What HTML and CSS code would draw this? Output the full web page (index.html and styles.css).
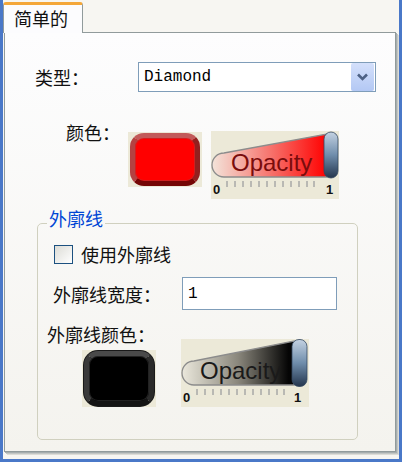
FILE: index.html
```html
<!DOCTYPE html>
<html lang="zh">
  <head>
    <meta charset="UTF-8">
    <title>简单的</title>
    <link rel="stylesheet" href="styles.css">
  </head>
  <body>
    <div class="window">
      <div class="tabs">
        <div class="tab">简单的</div>
      </div>
      <div class="panel">
        <div class="row row--type">
          <span class="label label--type">类型：</span>
          <div class="combo">
            <span class="combo__text">Diamond</span>
            <span class="combo__btn">
              <svg width="23" height="28" viewBox="0 0 23 28"><path d="M7 11.5 L11.5 16 L16 11.5" fill="none" stroke="#4d6185" stroke-width="2.6"/></svg>
            </span>
          </div>
        </div>
        <div class="row row--color">
          <span class="label label--color">颜色：</span>
          <div class="swatch swatch--fill"><div class="swatch__inner swatch__inner--red"></div></div>
          <svg class="opacity opacity--fill" width="128" height="68" viewBox="0 0 128 68">
            <defs>
              <linearGradient id="gRed" x1="0" y1="0" x2="1" y2="0">
                <stop offset="0" stop-color="#f3e4da"/>
                <stop offset="0.55" stop-color="#f76a64"/>
                <stop offset="1" stop-color="#ff0000"/>
              </linearGradient>
              <linearGradient id="gThumb" x1="0" y1="0" x2="0" y2="1">
                <stop offset="0" stop-color="#c4d2e2"/>
                <stop offset="0.5" stop-color="#6f8dab"/>
                <stop offset="1" stop-color="#24354d"/>
              </linearGradient>
            </defs>
            <rect width="128" height="68" fill="#ece9d8"/>
            <path d="M13 46 A12 12 0 0 1 13 22 L116 3 L116 46 Z" fill="url(#gRed)" stroke="#8c8c8c" stroke-width="1.3"/>
            <text x="20" y="40" class="opacity__text" fill="#7a0c0c">Opacity</text>
            <rect x="113" y="1" width="14" height="46" rx="7" fill="url(#gThumb)" stroke="#34475f" stroke-width="0.8"/>
            <g stroke="#a4a4a4" stroke-width="1.4">
              <line x1="16" y1="50" x2="16" y2="56"/><line x1="24" y1="50" x2="24" y2="56"/><line x1="32" y1="50" x2="32" y2="56"/>
              <line x1="40" y1="50" x2="40" y2="56"/><line x1="48" y1="50" x2="48" y2="56"/><line x1="56" y1="50" x2="56" y2="56"/>
              <line x1="64" y1="50" x2="64" y2="56"/><line x1="72" y1="50" x2="72" y2="56"/><line x1="80" y1="50" x2="80" y2="56"/>
              <line x1="88" y1="50" x2="88" y2="56"/><line x1="96" y1="50" x2="96" y2="56"/><line x1="103" y1="50" x2="103" y2="56"/>
            </g>
            <text x="2" y="63" class="opacity__num">0</text>
            <text x="115" y="63" class="opacity__num">1</text>
          </svg>
        </div>
        <fieldset class="group">
          <legend class="group__title">外廓线</legend>
          <label class="check">
            <span class="check__box"></span>
            <span>使用外廓线</span>
          </label>
          <div class="row row--width">
            <span class="label label--width">外廓线宽度：</span>
            <input class="field" type="text" value="1">
          </div>
          <div class="row row--outline">
            <div class="outline-left">
              <span class="label">外廓线颜色：</span>
              <div class="swatch swatch--outline"><div class="swatch__inner swatch__inner--black"></div></div>
            </div>
            <svg class="opacity opacity--outline" width="128" height="68" viewBox="0 0 128 68">
              <defs>
                <linearGradient id="gBlack" x1="0" y1="0" x2="1" y2="0">
                  <stop offset="0" stop-color="#ebe8dc"/>
                  <stop offset="0.5" stop-color="#8a877c"/>
                  <stop offset="0.95" stop-color="#050505"/>
                </linearGradient>
                <linearGradient id="gThumb2" x1="0" y1="0" x2="0" y2="1">
                  <stop offset="0" stop-color="#c4d2e2"/>
                  <stop offset="0.5" stop-color="#6f8dab"/>
                  <stop offset="1" stop-color="#24354d"/>
                </linearGradient>
              </defs>
              <rect width="128" height="68" fill="#ece9d8"/>
              <path d="M13 46 A12 12 0 0 1 13 22 L113 2 L113 46 Z" fill="url(#gBlack)" stroke="#8c8c8c" stroke-width="1.3"/>
              <text x="19" y="40" class="opacity__text" fill="#1a1a1a">Opacity</text>
              <rect x="111" y="0.5" width="15" height="47" rx="7" fill="url(#gThumb2)" stroke="#34475f" stroke-width="0.8"/>
              <g stroke="#a4a4a4" stroke-width="1.4">
                <line x1="16" y1="50" x2="16" y2="56"/><line x1="24" y1="50" x2="24" y2="56"/><line x1="32" y1="50" x2="32" y2="56"/>
                <line x1="40" y1="50" x2="40" y2="56"/><line x1="48" y1="50" x2="48" y2="56"/><line x1="56" y1="50" x2="56" y2="56"/>
                <line x1="64" y1="50" x2="64" y2="56"/><line x1="72" y1="50" x2="72" y2="56"/><line x1="80" y1="50" x2="80" y2="56"/>
                <line x1="88" y1="50" x2="88" y2="56"/><line x1="96" y1="50" x2="96" y2="56"/><line x1="103" y1="50" x2="103" y2="56"/>
              </g>
              <text x="2" y="63" class="opacity__num">0</text>
              <text x="113" y="63" class="opacity__num">1</text>
            </svg>
          </div>
        </fieldset>
      </div>
    </div>
  </body>
</html>
```

FILE: styles.css
```css
html, body {
  margin: 0;
  padding: 0;
}
body {
  width: 402px;
  height: 462px;
  font-family: "Noto Sans CJK SC", "Noto Sans", sans-serif;
  font-size: 18px;
  color: #111;
  background: #f7f6f2;
}
.window {
  box-sizing: border-box;
  height: 462px;
  border: 3px solid #4a78c8;
  border-top: none;
  display: flex;
  flex-direction: column;
}
.tabs {
  height: 32px;
  display: flex;
  align-items: flex-end;
}
.tab {
  position: relative;
  z-index: 1;
  box-sizing: border-box;
  width: 80px;
  height: 31px;
  margin-bottom: -1px;
  padding-left: 10px;
  line-height: 27px;
  border: 1px solid #919b9c;
  border-bottom: none;
  border-top: 3px solid #f4a73a;
  border-radius: 3px 3px 0 0;
  background: #fcfcfe;
}
.panel {
  box-sizing: border-box;
  height: 420px;
  margin: 0 3px 0 1px;
  border: 1px solid #919b9c;
  box-shadow: 1px 1px 0 #a7aeae, 2px 2px 0 #c2c6c4, 3px 3px 0 #dddcd6;
  background: linear-gradient(#fdfdfe, #f4f3ee);
  padding-top: 29px;
}
.row {
  display: flex;
}
.label {
  display: block;
  line-height: 24px;
  white-space: nowrap;
}
.row--type {
  align-items: center;
  height: 30px;
  margin-left: 30px;
}
.label--type {
  width: 103px;
}
.combo {
  box-sizing: border-box;
  width: 238px;
  height: 30px;
  border: 1px solid #7f9db9;
  background: #fff;
  display: flex;
  align-items: center;
  justify-content: space-between;
  padding: 0 1px 0 5px;
}
.combo__text {
  font-family: "Liberation Mono", monospace;
  font-size: 16px;
  color: #000;
}
.combo__btn {
  display: block;
  width: 23px;
  height: 28px;
  border-radius: 2px;
  background: linear-gradient(#d4e0fb, #b3c8f4);
}
.combo__btn svg {
  display: block;
}
.row--color {
  margin-top: 28px;
  margin-left: 61px;
  align-items: flex-start;
}
.label--color {
  width: 62px;
}
.swatch {
  box-sizing: border-box;
  width: 74px;
  height: 55px;
  padding: 1px 2px;
  background: #ece9d8;
}
.swatch--fill {
  margin-top: 12px;
  margin-right: 9px;
}
.swatch__inner {
  box-sizing: border-box;
  height: 100%;
  border-radius: 14px;
  border: 5px solid;
}
.swatch__inner--red {
  background: #ff0000;
  border-color: #c25a5a #93201f #750606 #b44242;
  box-shadow: inset 0 0 0 1px #d02020;
}
.swatch__inner--black {
  background: #000;
  border-color: #4a4a4a #2a2a2a #141414 #3a3a3a;
  box-shadow: inset 0 0 0 1px #222, 0 0 0 1px #1a1a1a;
}
.opacity {
  display: block;
}
.opacity--fill {
  margin-top: 11px;
}
.opacity__text {
  font-family: "Liberation Sans", Arial, sans-serif;
  font-size: 24px;
}
.opacity__num {
  font-family: "Liberation Sans", Arial, sans-serif;
  font-size: 13px;
  font-weight: bold;
  fill: #111;
}
.group {
  box-sizing: border-box;
  width: 321px;
  margin: 7px 0 0 32px;
  padding: 0 0 32px 0;
  border: 1px solid #d0d0bf;
  border-radius: 5px;
}
.group__title {
  margin-left: 9px;
  padding: 0 2px 11px;
  line-height: 24px;
  color: #0046d5;
}
.check {
  display: flex;
  align-items: center;
  margin: 1px 0 0 16px;
  line-height: 24px;
}
.check__box {
  box-sizing: border-box;
  width: 19px;
  height: 19px;
  margin-right: 8px;
  border: 1px solid #1c5180;
  background: linear-gradient(135deg, #dcdcd6, #fff);
}
.row--width {
  margin: 11px 0 0 15px;
  align-items: center;
}
.label--width {
  width: 129px;
}
.field {
  box-sizing: border-box;
  width: 155px;
  height: 33px;
  margin: 0;
  padding: 0 5px;
  border: 1px solid #7f9db9;
  background: #fff;
  font-family: "Liberation Mono", monospace;
  font-size: 16px;
  color: #000;
  outline: none;
}
.row--outline {
  margin: 12px 0 0 9px;
  align-items: flex-end;
}
.outline-left {
  width: 134px;
}
.swatch--outline {
  width: 74px;
  height: 57px;
  margin: 4px 0 0 35px;
}
```
